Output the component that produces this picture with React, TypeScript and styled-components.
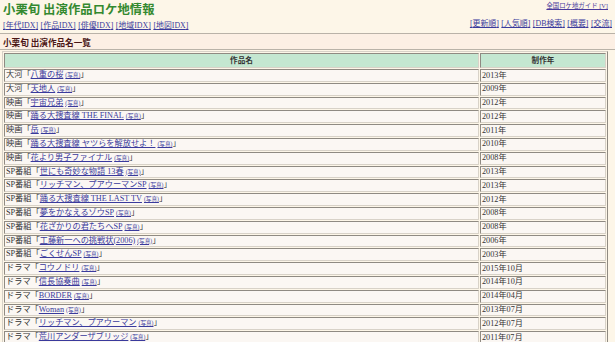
import React from "react";
import styled, { createGlobalStyle } from "styled-components";

const GlobalStyle = createGlobalStyle`
  html, body { margin: 0; padding: 0; }
  body {
    background: #fdf6e8;
    font-family: "Liberation Serif", "Noto Sans CJK JP", serif;
    color: #222;
  }
`;

const Header = styled.header`
  display: flex;
  justify-content: space-between;
  align-items: flex-start;
  height: 33px;
  padding: 0 3px 0 3px;
`;

const LeftCol = styled.div`
  display: flex;
  flex-direction: column;
`;

const RightCol = styled.div`
  display: flex;
  flex-direction: column;
  align-items: flex-end;
`;

const Title = styled.h1`
  margin: 2px 0 0 0;
  font-size: 12.3px;
  line-height: 14px;
  font-weight: bold;
  color: #34892f;
  font-family: "Noto Sans CJK JP", sans-serif;
  letter-spacing: 0.1px;
`;

const Nav = styled.nav<{ $top: number }>`
  margin-top: ${(p) => p.$top}px;
  font-size: 7.9px;
  line-height: 10px;
  white-space: nowrap;
  display: flex;
  gap: 2.5px;
`;

const Link = styled.a`
  color: #3a3a9c;
  text-decoration: underline;
  cursor: pointer;
`;

const GuideLink = styled.a`
  margin-top: 2px;
  margin-right: 4px;
  font-size: 6.4px;
  line-height: 8px;
  color: #4a3a9c;
  text-decoration: underline;
  white-space: nowrap;
`;

const SectionBar = styled.div`
  border-top: 1px solid #b9b2a8;
  border-bottom: 1px solid #b9b2a8;
  background: #fcefe4;
  height: 15px;
  display: flex;
  align-items: center;
  padding-left: 3px;
`;

const SectionTitle = styled.h2`
  margin: 0;
  font-size: 8.6px;
  font-weight: bold;
  color: #4a1616;
  font-family: "Noto Sans CJK JP", sans-serif;
`;

const Table = styled.table`
  margin: 1px 0 0 2px;
  width: 606px;
  border-collapse: separate;
  border-spacing: 1px;
  border: 1px solid;
  border-color: #d8d2c8 #8f8a82 #8f8a82 #d8d2c8;
  font-size: 8.2px;
`;

const Th = styled.th<{ $w?: number }>`
  background: #c4e7d1;
  border: 1px solid;
  border-color: #8f8a82 #d8d2c8 #d8d2c8 #8f8a82;
  line-height: 13px;
  padding: 0;
  font-weight: bold;
  color: #333;
  font-size: 7.6px;
  ${(p) => (p.$w ? `width: ${p.$w}px;` : "")}
`;

const Td = styled.td`
  background: #fbf7f3;
  border: 1px solid;
  border-color: #8f8a82 #d8d2c8 #d8d2c8 #8f8a82;
  line-height: 9.8px;
  padding: 0 0 0 1px;
  white-space: nowrap;
  color: #333;
`;

const Photo = styled.a`
  font-size: 5.6px;
  color: #3a3a9c;
  text-decoration: underline;
  margin-left: 2px;
`;

const rows: [string, string, string][] = [
  ["大河", "八重の桜", "2013年"],
  ["大河", "天地人", "2009年"],
  ["映画", "宇宙兄弟", "2012年"],
  ["映画", "踊る大捜査線 THE FINAL", "2012年"],
  ["映画", "岳", "2011年"],
  ["映画", "踊る大捜査線 ヤツらを解放せよ！", "2010年"],
  ["映画", "花より男子ファイナル", "2008年"],
  ["SP番組", "世にも奇妙な物語 13春", "2013年"],
  ["SP番組", "リッチマン、プアウーマンSP", "2013年"],
  ["SP番組", "踊る大捜査線 THE LAST TV", "2012年"],
  ["SP番組", "夢をかなえるゾウSP", "2008年"],
  ["SP番組", "花ざかりの君たちへSP", "2008年"],
  ["SP番組", "工藤新一への挑戦状(2006)", "2006年"],
  ["SP番組", "ごくせんSP", "2003年"],
  ["ドラマ", "コウノドリ", "2015年10月"],
  ["ドラマ", "信長協奏曲", "2014年10月"],
  ["ドラマ", "BORDER", "2014年04月"],
  ["ドラマ", "Woman", "2013年07月"],
  ["ドラマ", "リッチマン、プアウーマン", "2012年07月"],
  ["ドラマ", "荒川アンダーザブリッジ", "2011年07月"],
];

const leftNav = ["年代IDX", "作品IDX", "俳優IDX", "地域IDX", "地図IDX"];
const rightNav = ["更新順", "人気順", "DB検索", "概要", "交流"];

export default function App() {
  return (
    <>
      <GlobalStyle />
      <Header>
        <LeftCol>
          <Title>小栗旬 出演作品ロケ地情報</Title>
          <Nav $top={5}>
            {leftNav.map((n) => (
              <Link key={n}>[{n}]</Link>
            ))}
          </Nav>
        </LeftCol>
        <RightCol>
          <GuideLink>全国ロケ地ガイド [V]</GuideLink>
          <Nav $top={9}>
            {rightNav.map((n) => (
              <Link key={n}>[{n}]</Link>
            ))}
          </Nav>
        </RightCol>
      </Header>
      <SectionBar>
        <SectionTitle>小栗旬 出演作品名一覧</SectionTitle>
      </SectionBar>
      <Table>
        <thead>
          <tr>
            <Th>作品名</Th>
            <Th $w={124}>制作年</Th>
          </tr>
        </thead>
        <tbody>
          {rows.map(([kind, name, year]) => (
            <tr key={name}>
              <Td>
                {kind}「<Link>{name}</Link>
                <Photo>(写真)</Photo>」
              </Td>
              <Td>{year}</Td>
            </tr>
          ))}
        </tbody>
      </Table>
    </>
  );
}
